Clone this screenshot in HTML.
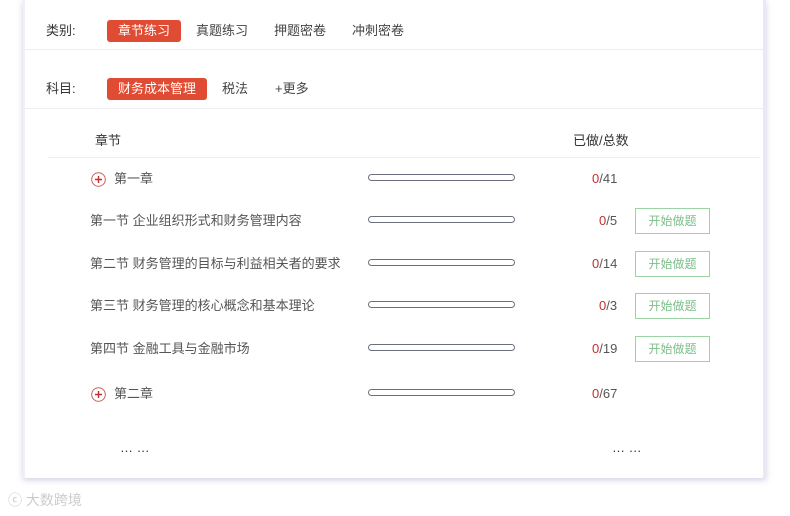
<!DOCTYPE html>
<html><head><meta charset="utf-8"><style>
*{margin:0;padding:0;box-sizing:border-box}
body{width:790px;height:516px;background:#fff;font-family:"Liberation Sans","Noto Sans CJK SC",sans-serif;position:relative;overflow:hidden;color:#444}
.panel{position:absolute;left:23px;top:0;width:743px;height:478px;background:#fff;box-shadow:0 2px 6px rgba(150,150,200,.45);border-right:3px solid #e8e8f6;border-left:2px solid #f0f0f8}
.a{position:absolute;white-space:nowrap;font-size:13px;line-height:16px}
.tag{position:absolute;background:#e04b33;color:#fff;font-size:13px;border-radius:3px;height:22px;line-height:22px;text-align:center}
.line{position:absolute;height:1px;background:#eeeef2}
.bar{position:absolute;left:368px;width:147px;height:7px;border:1px solid #6c6f80;border-radius:4px;background:#fff}
.cnt{position:absolute;font-size:13px;line-height:16px;color:#555}
.cnt b{font-weight:normal;color:#c03030}
.btn{position:absolute;left:635px;width:75px;height:26px;border:1px solid #9bd3a4;color:#7cbf88;font-size:12px;line-height:24px;text-align:center}
.plus{position:absolute;left:91px;width:15px;height:15px}
</style></head><body>
<div class="panel"></div>
<div class="a" style="left:46px;top:23px;color:#333">类别:</div>
<div class="tag" style="left:107px;top:20px;width:74px">章节练习</div>
<div class="a" style="left:196px;top:23px">真题练习</div>
<div class="a" style="left:274px;top:23px">押题密卷</div>
<div class="a" style="left:352px;top:23px">冲刺密卷</div>
<div class="line" style="left:25px;top:49px;width:738px"></div>
<div class="a" style="left:46px;top:81px;color:#333">科目:</div>
<div class="tag" style="left:107px;top:78px;width:100px">财务成本管理</div>
<div class="a" style="left:222px;top:81px">税法</div>
<div class="a" style="left:275px;top:81px">+更多</div>
<div class="line" style="left:25px;top:108px;width:738px"></div>
<div class="a" style="left:95px;top:133px;color:#333">章节</div>
<div class="a" style="left:573px;top:133px;color:#333">已做/总数</div>
<div class="line" style="left:48px;top:157px;width:712px"></div>

<svg class="plus" style="top:172px" viewBox="0 0 15 15"><circle cx="7.5" cy="7.5" r="6.8" fill="none" stroke="#c86060" stroke-width="1"/><path d="M7.5 4v7M4 7.5h7" stroke="#c03030" stroke-width="1.4"/></svg>
<div class="a" style="left:114px;top:171px;color:#555">第一章</div>
<div class="bar" style="top:174px"></div>
<div class="cnt" style="left:592px;top:171px"><b>0</b>/41</div>

<div class="a" style="left:90px;top:213px;color:#555">第一节 企业组织形式和财务管理内容</div>
<div class="bar" style="top:216px"></div>
<div class="cnt" style="left:599px;top:213px"><b>0</b>/5</div>
<div class="btn" style="top:208px">开始做题</div>

<div class="a" style="left:90px;top:256px;color:#555">第二节 财务管理的目标与利益相关者的要求</div>
<div class="bar" style="top:259px"></div>
<div class="cnt" style="left:592px;top:256px"><b>0</b>/14</div>
<div class="btn" style="top:251px">开始做题</div>

<div class="a" style="left:90px;top:298px;color:#555">第三节 财务管理的核心概念和基本理论</div>
<div class="bar" style="top:301px"></div>
<div class="cnt" style="left:599px;top:298px"><b>0</b>/3</div>
<div class="btn" style="top:293px">开始做题</div>

<div class="a" style="left:90px;top:341px;color:#555">第四节 金融工具与金融市场</div>
<div class="bar" style="top:344px"></div>
<div class="cnt" style="left:592px;top:341px"><b>0</b>/19</div>
<div class="btn" style="top:336px">开始做题</div>

<svg class="plus" style="top:387px" viewBox="0 0 15 15"><circle cx="7.5" cy="7.5" r="6.8" fill="none" stroke="#c86060" stroke-width="1"/><path d="M7.5 4v7M4 7.5h7" stroke="#c03030" stroke-width="1.4"/></svg>
<div class="a" style="left:114px;top:386px;color:#555">第二章</div>
<div class="bar" style="top:389px"></div>
<div class="cnt" style="left:592px;top:386px"><b>0</b>/67</div>

<div class="a" style="left:120px;top:440px;color:#333">… …</div>
<div class="a" style="left:612px;top:440px;color:#333">… …</div>

<div class="a" style="left:8px;top:492px;color:#ccc;font-size:14px">ⓒ 大数跨境</div>
</body></html>
